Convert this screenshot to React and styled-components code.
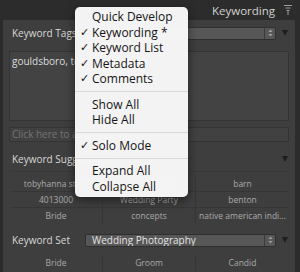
import styled, { createGlobalStyle } from "styled-components";

const GlobalStyle = createGlobalStyle`
  html, body {
    margin: 0;
    padding: 0;
    background: #2b2b2b;
  }
  * {
    box-sizing: border-box;
  }
`;

const menuItems = [
  { label: "Quick Develop" },
  { label: "Keywording *", checked: true },
  { label: "Keyword List", checked: true },
  { label: "Metadata", checked: true },
  { label: "Comments", checked: true },
  { sep: true },
  { label: "Show All" },
  { label: "Hide All" },
  { sep: true },
  { label: "Solo Mode", checked: true },
  { sep: true },
  { label: "Expand All" },
  { label: "Collapse All" },
];

const suggestions = [
  "tobyhanna state",
  "gouldsboro",
  "barn",
  "4013000",
  "Wedding Party",
  "benton",
  "Bride",
  "concepts",
  "native american indian dance",
];

const keywordSet = ["Bride", "Groom", "Candid"];

const FilterIcon = () => (
  <svg width="8" height="10" viewBox="0 0 8 10">
    <g stroke="#9c9c9c" strokeWidth="1" fill="none">
      <line x1="0" y1="0.5" x2="8" y2="0.5" />
      <line x1="1.5" y1="3" x2="6.5" y2="3" />
      <line x1="2.5" y1="5.5" x2="5.5" y2="5.5" />
      <line x1="4" y1="6" x2="4" y2="10" />
    </g>
  </svg>
);

const StepperIcon = () => (
  <svg width="5" height="8" viewBox="0 0 5 8">
    <path d="M2.5 0.5 L4.5 3 L0.5 3 Z" fill="#a0a0a0" />
    <path d="M2.5 7.5 L4.5 5 L0.5 5 Z" fill="#a0a0a0" />
  </svg>
);

const Select = ({ value }) => (
  <SelectBox>
    <SelectText>{value}</SelectText>
    <Stepper>
      <StepperIcon />
    </Stepper>
  </SelectBox>
);

const App = () => {
  return (
    <Root>
      <GlobalStyle />
      <TopBar>
        <Title>Keywording</Title>
        <FilterIcon />
      </TopBar>
      <Body>
        <Panel>
          <Section>
            <Header height={26}>
              <Label>Keyword Tags</Label>
              <Select value="" />
              <Disclosure />
            </Header>
            <TextArea>gouldsboro, tobyhanna state</TextArea>
            <InputBox>Click here to add keywords</InputBox>
          </Section>
          <Divider />
          <Section>
            <Header height={24}>
              <Label grow>Keyword Suggestions</Label>
              <Disclosure />
            </Header>
            <Grid bordered>
              {suggestions.map((s, i) => (
                <Cell key={i} col={i % 3} lastRow={i >= 6}>
                  {s}
                </Cell>
              ))}
            </Grid>
          </Section>
          <Divider />
          <Section>
            <Header height={24}>
              <Label>Keyword Set</Label>
              <Select value="Wedding Photography" />
              <Disclosure />
            </Header>
            <Grid>
              {keywordSet.map((s, i) => (
                <Cell key={i} col={i} lastRow>
                  {s}
                </Cell>
              ))}
            </Grid>
          </Section>
        </Panel>
        <ScrollStrip />
      </Body>
      <Menu>
        {menuItems.map((item, i) =>
          item.sep ? (
            <MenuSep key={i} />
          ) : (
            <MenuItem key={i}>
              <Check>{item.checked ? "✓" : ""}</Check>
              {item.label}
            </MenuItem>
          )
        )}
      </Menu>
    </Root>
  );
};

export default App;

const Root = styled.div`
  position: relative;
  width: 300px;
  height: 272px;
  overflow: hidden;
  background: #2b2b2b;
  display: flex;
  flex-direction: column;
  font-family: "Open Sans", "DejaVu Sans", sans-serif;
`;

const TopBar = styled.div`
  height: 20px;
  flex-shrink: 0;
  display: flex;
  align-items: center;
  justify-content: flex-end;
  gap: 9px;
  padding-right: 8px;
  background: #2c2c2c;
`;

const Title = styled.span`
  font-size: 11.5px;
  color: #d2d2d2;
  line-height: 1;
  margin-top: 1px;
`;

const Body = styled.div`
  flex: 1;
  display: flex;
  padding-left: 3px;
  min-height: 0;
`;

const Panel = styled.div`
  flex: 1;
  background: #3e3e3e;
  display: flex;
  flex-direction: column;
`;

const ScrollStrip = styled.div`
  width: 5px;
  background: #2c2c2c;
`;

const Section = styled.div`
  display: flex;
  flex-direction: column;
  padding-bottom: 4px;
  &:first-child {
    padding-bottom: 5px;
  }
`;

const Divider = styled.div`
  height: 1px;
  background: #1d1d1d;
`;

const Header = styled.div`
  height: ${(p) => p.height}px;
  display: flex;
  align-items: center;
  padding: 0 7px 0 9px;
`;

const Label = styled.span`
  width: ${(p) => (p.grow ? "auto" : "73px")};
  flex: ${(p) => (p.grow ? 1 : "none")};
  font-size: 10px;
  color: #d8d8d8;
  white-space: nowrap;
`;

const SelectBox = styled.div`
  flex: 1;
  height: 13px;
  display: flex;
  align-items: center;
  background: #575757;
  border: 1px solid #2f2f2f;
  border-radius: 2px;
  margin-right: 6px;
`;

const SelectText = styled.span`
  flex: 1;
  font-size: 10px;
  color: #e4e4e4;
  padding-left: 6px;
  line-height: 11px;
  white-space: nowrap;
  overflow: hidden;
`;

const Stepper = styled.div`
  width: 11px;
  height: 100%;
  display: flex;
  align-items: center;
  justify-content: center;
  border-left: 1px solid #3a3a3a;
`;

const Disclosure = styled.div`
  width: 0;
  height: 0;
  border-left: 3.5px solid transparent;
  border-right: 3.5px solid transparent;
  border-top: 6px solid #1e1e1e;
`;

const TextArea = styled.div`
  margin: 5px 6px 0 6px;
  height: 70px;
  background: #434343;
  border: 1px solid #343434;
  font-size: 10px;
  color: #dcdcdc;
  padding: 2px 2px;
  white-space: nowrap;
  overflow: hidden;
`;

const InputBox = styled.div`
  margin: 6px 6px 0 6px;
  height: 15px;
  background: #414141;
  border: 1px solid #343434;
  font-size: 10px;
  line-height: 13px;
  color: #757575;
  padding-left: 2px;
  white-space: nowrap;
  overflow: hidden;
`;

const Grid = styled.div`
  display: grid;
  grid-template-columns: repeat(3, minmax(0, 1fr));
  grid-auto-rows: 16px;
  margin: 0 6px 0 7px;
  padding-top: ${(p) => (p.bordered ? 4 : 3)}px;
  border-top: ${(p) => (p.bordered ? "1px solid #393939" : "none")};
`;

const Cell = styled.div`
  font-size: 8.5px;
  line-height: 16px;
  text-align: center;
  color: #aaaaaa;
  padding: 0 3px;
  min-width: 0;
  white-space: nowrap;
  overflow: hidden;
  text-overflow: ellipsis;
  border-right: ${(p) => (p.col < 2 ? "1px solid #363636" : "none")};
  border-bottom: ${(p) => (p.lastRow ? "none" : "1px solid #363636")};
`;

const Menu = styled.div`
  position: absolute;
  left: 75px;
  top: 7px;
  width: 113px;
  padding: 2px 0 3px 0;
  background: rgba(247, 247, 247, 0.98);
  border-radius: 5px;
  box-shadow: 0 3px 10px rgba(0, 0, 0, 0.5);
`;

const MenuItem = styled.div`
  height: 15.5px;
  display: flex;
  align-items: center;
  font-size: 12px;
  color: #151515;
  white-space: nowrap;
  padding-left: 5px;
`;

const Check = styled.span`
  width: 12px;
  font-size: 11px;
  font-family: "DejaVu Sans", sans-serif;
`;

const MenuSep = styled.div`
  height: 10px;
  display: flex;
  align-items: center;
  &::after {
    content: "";
    flex: 1;
    height: 1px;
    background: #d8d8d8;
  }
`;
